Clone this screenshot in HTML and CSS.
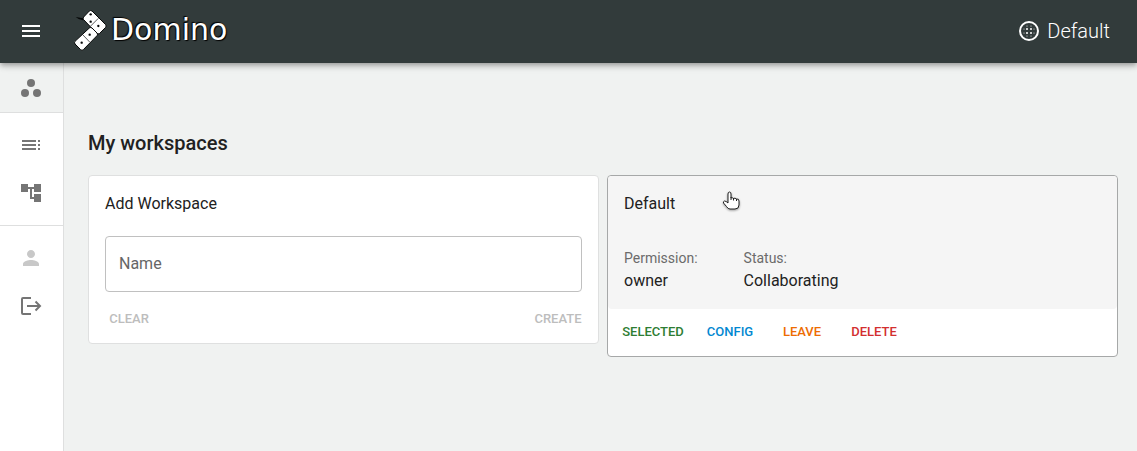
FILE: index.html
```html
<!DOCTYPE html>
<html lang="en">
<head>
  <meta charset="utf-8">
  <meta name="viewport" content="width=device-width, initial-scale=1">
  <title>Domino</title>
  <link rel="stylesheet" href="styles.css">
</head>
<body>
  <header class="topbar">
    <button class="icon-button menu-button" type="button" aria-label="Open menu">
      <svg class="icon" viewBox="0 0 24 24"><path d="M3 18h18v-2H3v2zm0-5h18v-2H3v2zm0-7v2h18V6H3z"/></svg>
    </button>
    <a class="brand" href="#">
      <svg class="brand-mark" viewBox="0 0 102 126" aria-hidden="true">
        <path d="M5 21 28 25 34 19 33 30 26 31 14 27Z" fill="#050707"/>
        <g stroke="#050707" stroke-width="3" fill="#fff">
          <path d="M46 3Q50 0 54 3L95 44Q98 48 95 52L76 71Q72 73 68 70L28 28Q26 24 29 21Z"/>
          <path d="M46 54Q50 51 54 54L69 69Q72 73 69 77L28 119Q24 123 20 119L3 102Q0 98 3 94Z"/>
          <path d="M73 25 50 48M26 74 47 96" fill="none" stroke-width="2"/>
        </g>
        <g fill="#050707">
          <circle cx="50" cy="13" r="3.5"/><circle cx="50" cy="35" r="3.5"/>
          <circle cx="73" cy="48" r="3.5"/><circle cx="47" cy="74" r="3.5"/>
          <circle cx="23" cy="98" r="3.5"/>
        </g>
      </svg>
      <span class="brand-name">Domino</span>
    </a>
    <div class="current-workspace">
      <svg class="icon" viewBox="0 0 24 24" aria-hidden="true">
        <circle cx="12" cy="12" r="9" fill="none" stroke="currentColor" stroke-width="2"/>
        <circle cx="10" cy="10" r="1"/><circle cx="14" cy="10" r="1"/>
        <circle cx="10" cy="14" r="1"/><circle cx="14" cy="14" r="1"/>
        <circle cx="10" cy="7" r=".5"/><circle cx="14" cy="7" r=".5"/>
        <circle cx="7" cy="10" r=".5"/><circle cx="17" cy="10" r=".5"/>
        <circle cx="7" cy="14" r=".5"/><circle cx="17" cy="14" r=".5"/>
        <circle cx="10" cy="17" r=".5"/><circle cx="14" cy="17" r=".5"/>
      </svg>
      <span>Default</span>
    </div>
  </header>

  <div class="shell">
    <nav class="sidebar" aria-label="Main">
      <div class="nav-group nav-group-active">
        <a class="nav-item" href="#" aria-label="Workspaces" aria-current="page">
          <svg class="icon" viewBox="0 0 24 24"><circle cx="6" cy="17" r="4"/><circle cx="12" cy="7" r="4"/><circle cx="18" cy="17" r="4"/></svg>
        </a>
      </div>
      <div class="nav-group">
        <a class="nav-item" href="#" aria-label="Workflows">
          <svg class="icon" viewBox="0 0 24 24"><path d="M3 9h14V7H3v2zm0 4h14v-2H3v2zm0 4h14v-2H3v2zm16 0h2v-2h-2v2zm0-10v2h2V7h-2zm0 6h2v-2h-2v2z"/></svg>
        </a>
        <a class="nav-item" href="#" aria-label="Workflow editor">
          <svg class="icon" viewBox="0 0 24 24"><path d="M22 11V3h-7v3H9V3H2v8h7V8h2v10h4v3h7v-8h-7v3h-2V8h2v3z"/></svg>
        </a>
      </div>
      <div class="nav-group">
        <a class="nav-item nav-item-disabled" href="#" aria-label="Profile" aria-disabled="true">
          <svg class="icon" viewBox="0 0 24 24"><path d="M12 12c2.210 0 4-1.790 4-4s-1.790-4-4-4-4 1.790-4 4 1.790 4 4 4zm0 2c-2.670 0-8 1.340-8 4v2h16v-2c0-2.660-5.330-4-8-4z"/></svg>
        </a>
        <a class="nav-item" href="#" aria-label="Log out">
          <svg class="icon" viewBox="0 0 24 24"><path d="M12 4H4q-1 0-1 1v14q0 1 1 1h8M8 12h13M16.500 7.500 21 12l-4.500 4.500" fill="none" stroke="currentColor" stroke-width="2"/></svg>
        </a>
      </div>
    </nav>

    <main class="content">
      <h1 class="page-title">My workspaces</h1>
      <div class="cards">
        <form class="card">
          <div class="card-body">
            <h2 class="card-title">Add Workspace</h2>
            <div class="field">
              <input class="field-input" id="workspace-name" type="text">
              <label class="field-label" for="workspace-name">Name</label>
            </div>
          </div>
          <div class="card-actions card-actions-split">
            <button class="button" type="button" disabled>CLEAR</button>
            <button class="button" type="submit" disabled>CREATE</button>
          </div>
        </form>

        <section class="card card-selected">
          <div class="card-body card-summary">
            <h2 class="card-title">Default</h2>
            <dl class="facts">
              <div class="fact"><dt>Permission:</dt><dd>owner</dd></div>
              <div class="fact"><dt>Status:</dt><dd>Collaborating</dd></div>
            </dl>
            <svg class="pointer" viewBox="0 0 18 20" aria-hidden="true">
              <path d="M6 12V3Q6 1 7.500 1T9 3V7Q10 6 11.500 7.500Q13 6.500 14.500 8Q17 7.500 17 10V14Q17 18 13 18H8Q6 18 4.500 15.500L1.500 12Q1 10.500 2.500 10Q4 10 6 12Z" fill="#fff" stroke="#222" stroke-linejoin="round"/>
              <path d="M9 6V9M11.500 7V9.500M14.500 8V10" fill="none" stroke="#222"/>
            </svg>
          </div>
          <div class="card-actions">
            <button class="button button-wide button-green" type="button">SELECTED</button>
            <button class="button button-blue" type="button">CONFIG</button>
            <button class="button button-orange" type="button">LEAVE</button>
            <button class="button button-red" type="button">DELETE</button>
          </div>
        </section>
      </div>
    </main>
  </div>
</body>
</html>
```
FILE: styles.css
```css
* {
  box-sizing: border-box;
}

body {
  display: flex;
  flex-direction: column;
  min-height: 100vh;
  margin: 0;
  background: #f0f2f1;
  color: #212121;
  font: 16px/24px Roboto, "Liberation Sans", sans-serif;
}

h1, h2, dl, dd {
  margin: 0;
}

button, input {
  font-family: inherit;
}

.icon {
  display: block;
  width: 24px;
  height: 24px;
  fill: currentColor;
}

.topbar {
  position: relative;
  z-index: 1;
  display: flex;
  align-items: center;
  height: 63px;
  padding: 0 27px 1px 19px;
  background: #323b3b;
  color: #fff;
  box-shadow: 0 2px 4px -1px rgba(0, 0, 0, .2), 0 4px 5px rgba(0, 0, 0, .14), 0 1px 10px rgba(0, 0, 0, .12);
}

.icon-button {
  padding: 0;
  border: 0;
  background: none;
  color: inherit;
}

.brand {
  display: flex;
  align-items: center;
  gap: 3px;
  margin-left: 31px;
  color: #fff;
  text-decoration: none;
}

.brand-mark {
  width: 34px;
  height: 42px;
}

.brand-name {
  padding-bottom: 2px;
  font: 30px/40px "DejaVu Sans", sans-serif;
  text-shadow: 1px 1px 1px #000, -1px -1px 1px #000;
}

.current-workspace {
  display: flex;
  align-items: center;
  gap: 6px;
  margin-left: auto;
  font-size: 20px;
  font-weight: 300;
}

.shell {
  display: flex;
  flex: 1;
}

.sidebar {
  width: 64px;
  border-right: 1px solid #dedfdf;
  background: #fff;
}

.nav-group {
  padding: 8px 0;
  border-bottom: 1px solid #dedfdf;
}

.nav-group:last-child {
  border-bottom: 0;
}

.nav-group-active {
  padding: 1px 0 0;
  background: #f0f2f1;
}

.nav-item {
  display: flex;
  align-items: center;
  height: 48px;
  padding-left: 19px;
  color: #757575;
}

.nav-item-disabled {
  color: #c8c8c8;
}

.content {
  flex: 1;
  padding: 64px 19px 24px 24px;
}

.page-title {
  margin-bottom: 16px;
  font-size: 20px;
  font-weight: 500;
  line-height: 32px;
}

.cards {
  display: grid;
  grid-template-columns: 1fr 1fr;
  align-items: start;
  gap: 8px;
}

.card {
  border: 1px solid #dfe0e0;
  border-radius: 4px;
  background: #fff;
}

.card-selected {
  border-color: #a6a8a8;
}

.card-body {
  padding: 16px 16px 4px;
}

.card-title {
  margin-bottom: 20px;
  font-size: 16px;
  font-weight: 400;
  line-height: 24px;
}

.field {
  position: relative;
}

.field-input {
  display: block;
  width: 100%;
  height: 56px;
  padding: 0 13px;
  border: 1px solid #c0c0c0;
  border-radius: 4px;
  background: #fff;
  font-size: 16px;
}

.field-label {
  position: absolute;
  top: 16px;
  left: 14px;
  color: #666;
}

.card-summary {
  position: relative;
  padding-bottom: 16px;
  border-radius: 4px;
  background: #f5f5f5;
}

.facts {
  display: flex;
  gap: 46px;
  padding-top: 12px;
}

.fact dt {
  color: #6b6b6b;
  font-size: 14px;
  line-height: 20px;
}

.fact dd {
  padding-top: 1px;
}

.pointer {
  position: absolute;
  top: 15px;
  left: 114px;
  width: 18px;
  height: 20px;
  filter: drop-shadow(0 1px 1px rgba(0, 0, 0, .4));
}

.card-actions {
  display: flex;
  gap: 8px;
  padding: 7px 8px 9px;
}

.card-actions-split {
  justify-content: space-between;
}

.button {
  min-width: 64px;
  padding: 4px;
  border: 0;
  border-radius: 4px;
  background: none;
  font-size: 13px;
  font-weight: 500;
  line-height: 23px;
}

.button:disabled {
  color: #bdbdbd;
}

.button-wide {
  min-width: 74px;
}

.button-green {
  color: #2e7d32;
}

.button-blue {
  color: #0288d1;
}

.button-orange {
  color: #ed6c02;
}

.button-red {
  color: #d32f2f;
}
```
